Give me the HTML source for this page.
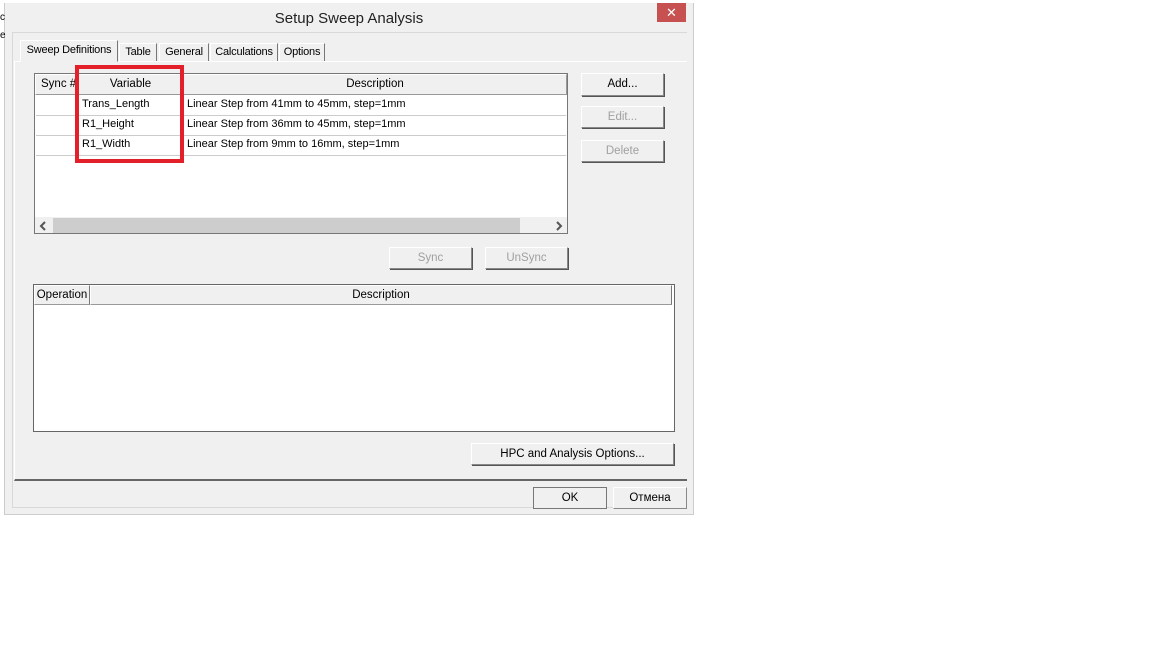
<!DOCTYPE html><html><head><style>
body{margin:0;width:1152px;height:648px;background:#fff;position:relative;overflow:hidden;font-family:"Liberation Sans",sans-serif;font-size:11px;color:#000}
.a{position:absolute;box-sizing:border-box}
.btn{position:absolute;box-sizing:border-box;background:#f0f0f0;border:1px solid #fff;border-right-color:#888;border-bottom-color:#888;box-shadow:1px 1px 0 #555;text-align:center;font-size:11.5px}
.dis{color:#a0a0a0}
.hd{position:absolute;box-sizing:border-box;background:#f0f0f0;border:1px solid #fff;border-right-color:#999;border-bottom-color:#999;text-align:center;font-size:11.5px;line-height:18px}
.row{position:absolute;left:1px;right:1px;height:20px;border-bottom:1px solid #ccc;line-height:19px}
.tab{position:absolute;box-sizing:border-box;top:43px;height:18px;border:1px solid #fff;border-right-color:#777;border-bottom:none;line-height:16px;font-size:11px;text-align:center;white-space:nowrap;letter-spacing:-0.2px}
</style></head><body>
<div class="a" style="left:4px;top:0;width:690px;height:515px;background:#f0f0f0;border:1px solid #ccc;border-top:none"></div>
<div class="a" style="left:0;top:0;width:1152px;height:3px;background:#fff"></div>
<div class="a" style="left:4px;top:10px;width:690px;text-align:center;font-size:15px;color:#222">Setup Sweep Analysis</div>
<div class="a" style="left:657px;top:3px;width:29px;height:19px;background:#c75050;color:#fff;text-align:center;line-height:19px;font-size:13px">✕</div>
<div class="a" style="left:12px;top:32px;width:675px;height:476px;border-top:1px solid #d8d8d8;border-left:1px solid #d8d8d8;border-bottom:1px solid #d8d8d8"></div>
<div class="a" style="left:14px;top:61px;width:673px;height:420px;border-top:1px solid #fff;border-bottom:2px solid #666;border-left:1px solid #fff"></div>
<div class="tab" style="left:20px;top:40px;height:22px;width:98px;background:#f0f0f0;border-bottom:1px solid #f0f0f0;z-index:2;line-height:18px">Sweep Definitions</div>
<div class="tab" style="left:119px;width:38px">Table</div>
<div class="tab" style="left:159px;width:50px">General</div>
<div class="tab" style="left:210px;width:68px">Calculations</div>
<div class="tab" style="left:279px;width:46px">Options</div>

<div class="a" style="left:34px;top:73px;width:534px;height:161px;background:#fff;border:1px solid #777">
<div class="hd" style="left:0;top:0;width:43px;height:21px;text-align:left;padding-left:5px">Sync #</div>
<div class="hd" style="left:43px;top:0;width:105px;height:21px">Variable</div>
<div class="hd" style="left:148px;top:0;width:384px;height:21px">Description</div>
<div class="row" style="top:21px"><span class="a" style="left:46px">Trans_Length</span><span class="a" style="left:151px">Linear Step from 41mm to 45mm, step=1mm</span></div>
<div class="row" style="top:41px"><span class="a" style="left:46px">R1_Height</span><span class="a" style="left:151px">Linear Step from 36mm to 45mm, step=1mm</span></div>
<div class="row" style="top:61px"><span class="a" style="left:46px">R1_Width</span><span class="a" style="left:151px">Linear Step from 9mm to 16mm, step=1mm</span></div>
<div class="a" style="left:0;top:143px;width:532px;height:16px;background:#f0f0f0"></div>
<div class="a" style="left:18px;top:144px;width:467px;height:15px;background:#cdcdcd"></div>
<svg class="a" style="left:4px;top:147px" width="8" height="10"><path d="M6 1 L2 5 L6 9" stroke="#555" stroke-width="2" fill="none"/></svg>
<svg class="a" style="left:520px;top:147px" width="8" height="10"><path d="M2 1 L6 5 L2 9" stroke="#555" stroke-width="2" fill="none"/></svg>
</div>
<div class="a" style="left:75px;top:65px;width:109px;height:98px;border:4px solid #e3202a"></div>

<div class="btn" style="left:581px;top:73px;width:83px;height:23px;line-height:21px">Add...</div>
<div class="btn dis" style="left:581px;top:106px;width:83px;height:22px;line-height:20px">Edit...</div>
<div class="btn dis" style="left:581px;top:140px;width:83px;height:22px;line-height:20px">Delete</div>
<div class="btn dis" style="left:389px;top:247px;width:83px;height:22px;line-height:20px">Sync</div>
<div class="btn dis" style="left:485px;top:247px;width:83px;height:22px;line-height:20px">UnSync</div>

<div class="a" style="left:33px;top:284px;width:642px;height:148px;background:#fff;border:1px solid #666">
<div class="hd" style="left:0;top:0;width:56px;height:20px;border-right-color:#777">Operation</div>
<div class="hd" style="left:56px;top:0;width:582px;height:20px;border-right-color:#777">Description</div>
</div>
<div class="btn" style="left:471px;top:443px;width:203px;height:22px;line-height:20px">HPC and Analysis Options...</div>
<div class="btn" style="left:533px;top:487px;width:74px;height:22px;line-height:20px;border:1px solid #777;box-shadow:none">OK</div>
<div class="btn" style="left:613px;top:487px;width:74px;height:22px;line-height:20px;box-shadow:none">Отмена</div>
<div class="a" style="left:0;top:12px;font-size:10px">c</div>
<div class="a" style="left:0;top:30px;font-size:10px">e</div>
</body></html>
